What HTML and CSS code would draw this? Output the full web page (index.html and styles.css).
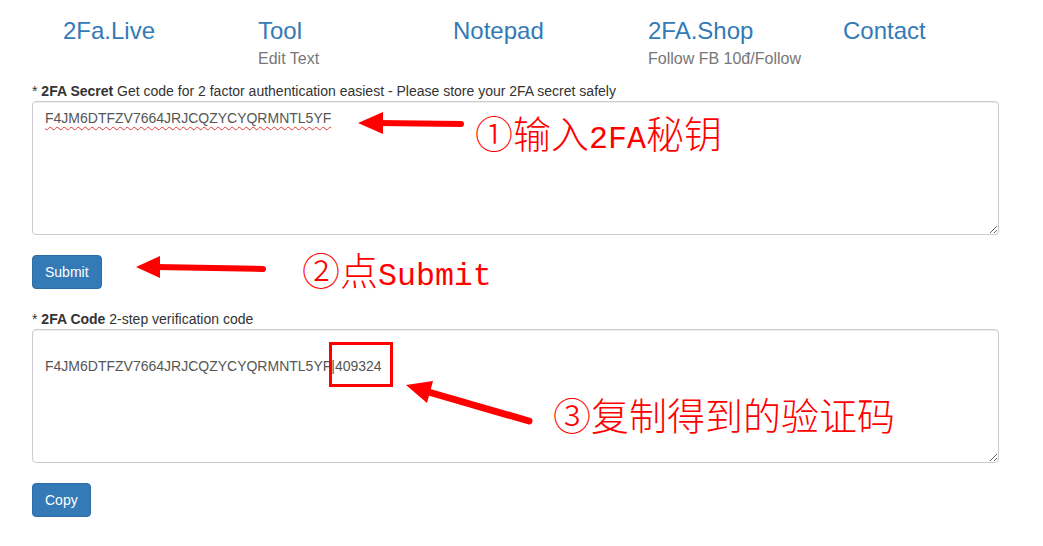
FILE: index.html
```html
<!DOCTYPE html>
<html lang="vi">
<head>
    <meta charset="UTF-8">
    <meta name="viewport" content="width=device-width, initial-scale=1.0">
    <title>2FA Live</title>
    <link rel="stylesheet" href="styles.css">
</head>
<body>
    <div class="page">
        <nav class="topnav">
            <div class="nav-item"><a href="#">2Fa.Live</a></div>
            <div class="nav-item"><a href="#">Tool</a><span class="sub">Edit Text</span></div>
            <div class="nav-item"><a href="#">Notepad</a></div>
            <div class="nav-item"><a href="#">2FA.Shop</a><span class="sub">Follow FB 10đ/Follow</span></div>
            <div class="nav-item"><a href="#">Contact</a></div>
        </nav>

        <form class="twofa-form" onsubmit="return false">
            <label for="secret">* <b>2FA Secret</b> Get code for 2 factor authentication easiest - Please store your 2FA secret safely</label>
            <textarea id="secret" class="field spell">F4JM6DTFZV7664JRJCQZYCYQRMNTL5YF</textarea>
            <button type="submit" class="btn">Submit</button>

            <label for="code">* <b>2FA Code</b> 2-step verification code</label>
            <textarea id="code" class="field">

F4JM6DTFZV7664JRJCQZYCYQRMNTL5YF|409324</textarea>
            <button type="button" class="btn">Copy</button>
        </form>

        <!-- red hints drawn over the screenshot -->
        <svg class="marks" width="1043" height="546" viewBox="0 0 1043 546">
            <g fill="#f00" stroke="#f00" stroke-linecap="round">
                <line x1="461" y1="124" x2="378" y2="123" stroke-width="6"/>
                <polygon points="358,123 383,112 383,134" stroke="none"/>

                <line x1="263" y1="269" x2="156" y2="267" stroke-width="6"/>
                <polygon points="136,267 160,256 160,278" stroke="none"/>

                <line x1="529" y1="421" x2="425" y2="391" stroke-width="7"/>
                <polygon points="406,385 433,381 427,403" stroke="none"/>

                <rect x="330.5" y="343.5" width="61" height="42" fill="none" stroke-width="3"/>
            </g>
        </svg>
        <span class="hint hint-1">①输入<i>2FA</i>秘钥</span>
        <span class="hint hint-2">②点<i>Submit</i></span>
        <span class="hint hint-3">③复制得到的验证码</span>
    </div>
</body>
</html>
```

FILE: styles.css
```css
body {
    margin: 0;
    font-family: "Liberation Sans", Arial, sans-serif;
    font-size: 14px;
    line-height: 20px;
    color: #333;
    background: #fff;
}
.page {
    position: relative;
    width: 1043px;
    height: 546px;
    overflow: hidden;
}
.topnav {
    display: grid;
    grid-template-columns: repeat(5, 195px);
    padding: 16px 0 0 63px;
    margin-bottom: 12px;
}
.nav-item {
    display: flex;
    flex-direction: column;
}
.nav-item a {
    color: #337ab7;
    text-decoration: none;
    font-size: 24px;
    line-height: 30px;
}
.nav-item .sub {
    margin-top: 3px;
    color: #777;
    font-size: 16px;
    line-height: 20px;
}
.twofa-form {
    width: 967px;
    margin-left: 32px;
}
.twofa-form label {
    display: block;
    font-size: 14px;
    line-height: 20px;
}
.field {
    display: block;
    box-sizing: border-box;
    width: 100%;
    height: 134px;
    margin: 0 0 20px;
    padding: 6px 12px;
    border: 1px solid #ccc;
    border-radius: 4px;
    box-shadow: inset 0 1px 1px rgba(0, 0, 0, 0.075);
    font-family: "Liberation Sans", Arial, sans-serif;
    font-size: 14px;
    line-height: 20px;
    color: #555;
    resize: vertical;
}
.spell {
    text-decoration: underline wavy #e53935;
    text-decoration-thickness: 1px;
    text-underline-offset: 3px;
}
.btn {
    display: block;
    margin: 0 0 20px;
    padding: 6px 12px;
    border: 1px solid #2e6da4;
    border-radius: 4px;
    background: #337ab7;
    color: #fff;
    font-family: "Liberation Sans", Arial, sans-serif;
    font-size: 14px;
    line-height: 20px;
    cursor: pointer;
}
.marks {
    position: absolute;
    left: 0;
    top: 0;
    pointer-events: none;
}
.hint {
    position: absolute;
    color: #f00;
    font-family: "Noto Sans CJK SC", sans-serif;
    font-size: 38px;
    line-height: 38px;
    font-weight: 300;
    white-space: nowrap;
}
.hint i {
    font-style: normal;
    font-family: "Liberation Mono", monospace;
    font-size: 31.6px;
}
.hint-1 {
    left: 475px;
    top: 113px;
}
.hint-2 {
    left: 302px;
    top: 250px;
}
.hint-3 {
    left: 553px;
    top: 395px;
}
```
